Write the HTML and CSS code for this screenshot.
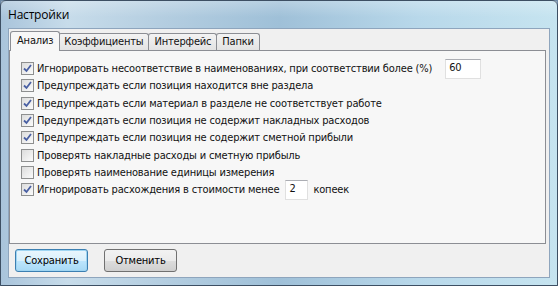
FILE: index.html
```html
<!DOCTYPE html>
<html lang="ru">
<head>
    <meta charset="UTF-8">
    <title>Настройки</title>
    <link rel="stylesheet" href="styles.css">
</head>
<body>
    <div class="window">
        <div class="titlebar">Настройки</div>

        <div class="client">
            <!-- Вкладки -->
            <div class="tabs">
                <div class="tab active">Анализ</div>
                <div class="tab">Коэффициенты</div>
                <div class="tab">Интерфейс</div>
                <div class="tab">Папки</div>
            </div>

            <div class="panel">
                <div class="row">
                    <span class="box checked"><svg viewBox="0 0 9 9" width="9" height="9"><path d="M1 4.5 L3.5 7 L8 1" fill="none" stroke="#4a60a3" stroke-width="1.8"/></svg></span>
                    <span class="label">Игнорировать несоответствие в наименованиях, при соответствии более (%)</span>
                    <span class="field wide">60</span>
                </div>
                <div class="row">
                    <span class="box checked"><svg viewBox="0 0 9 9" width="9" height="9"><path d="M1 4.5 L3.5 7 L8 1" fill="none" stroke="#4a60a3" stroke-width="1.8"/></svg></span>
                    <span class="label">Предупреждать если позиция находится вне раздела</span>
                </div>
                <div class="row">
                    <span class="box checked"><svg viewBox="0 0 9 9" width="9" height="9"><path d="M1 4.5 L3.5 7 L8 1" fill="none" stroke="#4a60a3" stroke-width="1.8"/></svg></span>
                    <span class="label">Предупреждать если материал в разделе не соответствует работе</span>
                </div>
                <div class="row">
                    <span class="box checked"><svg viewBox="0 0 9 9" width="9" height="9"><path d="M1 4.5 L3.5 7 L8 1" fill="none" stroke="#4a60a3" stroke-width="1.8"/></svg></span>
                    <span class="label">Предупреждать если позиция не содержит накладных расходов</span>
                </div>
                <div class="row">
                    <span class="box checked"><svg viewBox="0 0 9 9" width="9" height="9"><path d="M1 4.5 L3.5 7 L8 1" fill="none" stroke="#4a60a3" stroke-width="1.8"/></svg></span>
                    <span class="label">Предупреждать если позиция не содержит сметной прибыли</span>
                </div>
                <div class="row">
                    <span class="box"></span>
                    <span class="label">Проверять накладные расходы и сметную прибыль</span>
                </div>
                <div class="row">
                    <span class="box"></span>
                    <span class="label">Проверять наименование единицы измерения</span>
                </div>
                <div class="row">
                    <span class="box checked"><svg viewBox="0 0 9 9" width="9" height="9"><path d="M1 4.5 L3.5 7 L8 1" fill="none" stroke="#4a60a3" stroke-width="1.8"/></svg></span>
                    <span class="label">Игнорировать расхождения в стоимости менее</span>
                    <span class="field narrow">2</span>
                    <span class="label">копеек</span>
                </div>
            </div>

            <div class="buttons">
                <button class="btn default">Сохранить</button>
                <button class="btn">Отменить</button>
            </div>
        </div>
    </div>
</body>
</html>
```

FILE: styles.css
```css
body {
    margin: 0;
    background: #6f8aa6;
    font-family: "DejaVu Sans Condensed", "DejaVu Sans", sans-serif;
    font-size: 11px;
    letter-spacing: -0.17px;
    color: #111;
}

.window {
    width: 556px;
    height: 284px;
    border: 1px solid #3d4f63;
    border-radius: 6px 6px 0 0;
    background: linear-gradient(90deg, #a9c4db 0%, #c7dcea 12%, #b3cde0 30%, #9fc0d8 50%, #b8d8ea 75%, #c6e4f0 100%);
    display: flex;
    flex-direction: column;
}

.titlebar {
    height: 27px;
    line-height: 28px;
    padding-left: 7px;
    font-family: "Open Sans", "DejaVu Sans", sans-serif;
    font-size: 12px;
    letter-spacing: -0.2px;
    color: #000;
    background: linear-gradient(180deg, rgba(255,255,255,0.25), rgba(255,255,255,0) 60%);
}

.client {
    margin: 0 7px 7px 7px;
    flex: 1;
    background: #f0f0f0;
    border: 1px solid #8ea5bd;
    display: flex;
    flex-direction: column;
}

.tabs {
    display: flex;
    align-items: flex-end;
    height: 21px;
    padding-left: 1px;
    position: relative;
    z-index: 1;
}

.tab {
    height: 16px;
    line-height: 16px;
    padding: 0 5px;
    border: 1px solid #8c8e94;
    border-bottom: none;
    border-radius: 3px 3px 0 0;
    background: linear-gradient(#f3f3f3, #e3e3e3);
    margin-left: -1px;
}

.tab.active {
    height: 19px;
    line-height: 18px;
    padding: 0 6px;
    background: #f7f7f7;
    margin-left: 0;
    margin-right: -2px;
    position: relative;
    top: 1px;
}

.tab.active + .tab {
    margin-left: 0;
}

.panel {
    height: 183px;
    margin: 0 3px 0 0;
    border: 1px solid #8c8e94;
    background: #f7f7f7;
    padding: 9px 0 0 11px;
}

.row {
    display: flex;
    align-items: center;
    height: 17.3px;
}

.box {
    width: 11px;
    height: 11px;
    border: 1px solid #8e8f8f;
    background: linear-gradient(135deg, #dcdcdc, #fbfbfb);
    margin-right: 3px;
    display: flex;
    align-items: center;
    justify-content: center;
    flex-shrink: 0;
}

.label {
    white-space: nowrap;
}

.field {
    height: 20px;
    line-height: 16px;
    border: 1px solid #e0e0e0;
    border-top-color: #abadb3;
    background: #fff;
    padding-left: 3px;
    box-sizing: border-box;
}

.field.wide {
    width: 36px;
    margin-left: 13px;
}

.field.narrow {
    width: 23px;
    margin: 0 5px 0 6px;
}

.buttons {
    display: flex;
    gap: 16px;
    padding: 5px 0 0 6px;
}

.btn {
    width: 73px;
    height: 23px;
    font-family: inherit;
    font-size: 11px;
    letter-spacing: -0.17px;
    border: 1px solid #707070;
    border-radius: 3px;
    background: linear-gradient(#f2f2f2 0%, #ebebeb 50%, #dddddd 51%, #cfcfcf 100%);
    padding: 0;
}

.btn.default {
    border-color: #3c7fb1;
    background: linear-gradient(#eaf6fd 0%, #d9f0fc 50%, #bee6fd 51%, #a7d9f5 100%);
    box-shadow: inset 0 0 0 1px #9fd5f2;
}
```
